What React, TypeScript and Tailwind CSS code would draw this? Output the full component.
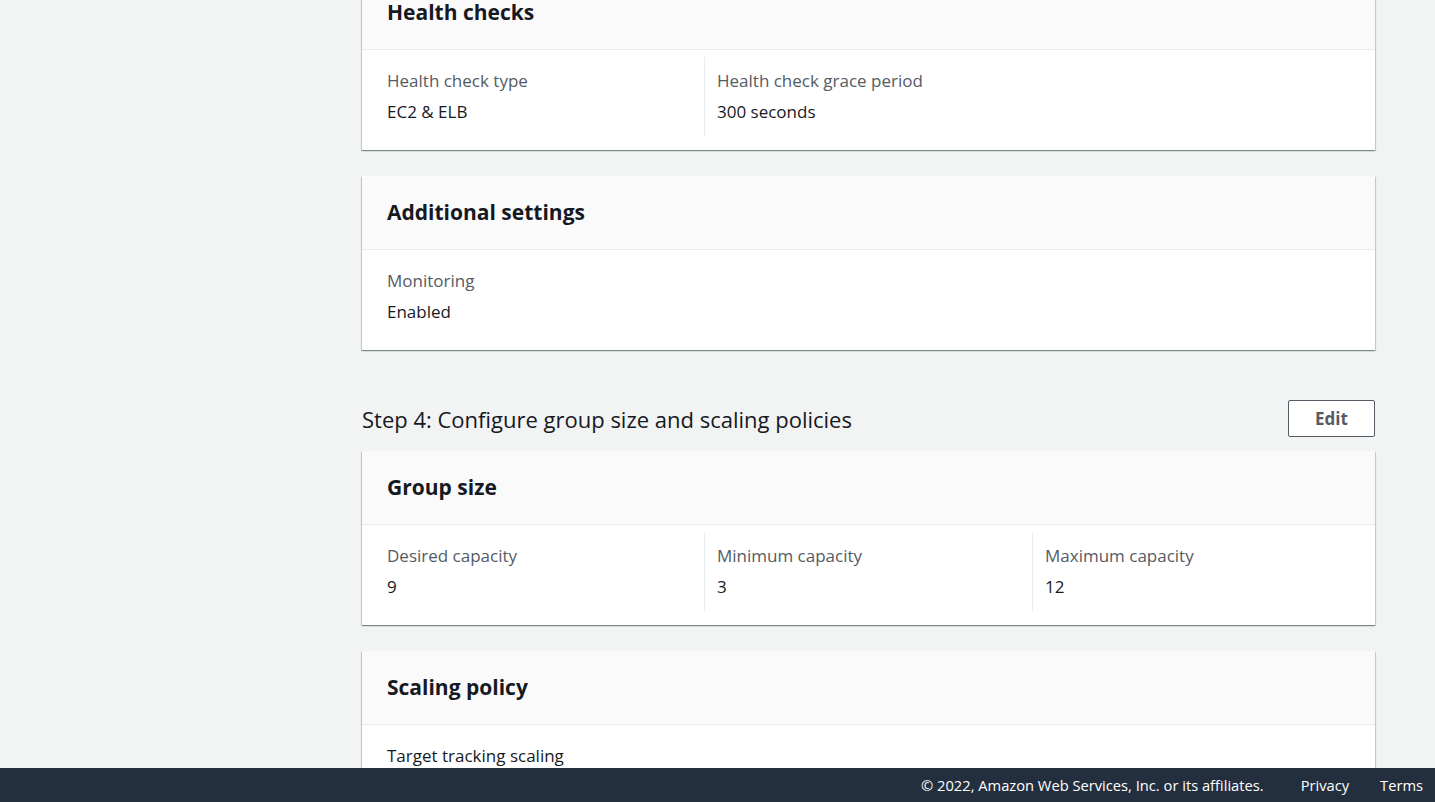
import React from 'react';

type Field = { label?: string; value: string };

const cardShadow =
  'shadow-[0_1px_1px_0_rgba(0,28,36,0.3),1px_1px_1px_0_rgba(0,28,36,0.15),-1px_1px_1px_0_rgba(0,28,36,0.15)]';

const Card: React.FC<{ title: string; fields: Field[]; className?: string; columns?: boolean }> = ({
  title,
  fields,
  className = '',
  columns = true,
}) => (
  <div className={`bg-white ${cardShadow} ${className}`}>
    <div className="h-[74px] flex items-center bg-[#fafafa] border-b border-[#eaeded] px-[25px] pb-[2px]">
      <h2 className="text-[21px] leading-[24px] font-bold text-[#16191f]">{title}</h2>
    </div>
    <div className="h-[100px] pl-[14px] pr-[15px] pt-[7px]">
      {columns ? (
        <div className="grid grid-cols-3">
          {fields.map((f, i) => (
            <div
              key={f.label}
              className={`pt-[12px] pb-[13px] ${i > 0 ? 'border-l border-[#eaeded] pl-[12px]' : 'pl-[11px]'}`}
            >
              <div className="text-[17px] leading-[24px] text-[#545b64]">{f.label}</div>
              <div className="mt-[7px] text-[17px] leading-[24px] text-[#16191f]">{f.value}</div>
            </div>
          ))}
        </div>
      ) : (
        <div className="pl-[11px] pt-[12px]">
          {fields.map((f) => (
            <div key={f.value} className="text-[17px] leading-[24px] text-[#16191f]">
              {f.value}
            </div>
          ))}
        </div>
      )}
    </div>
  </div>
);

export default function App() {
  return (
    <div
      className="h-[802px] w-full flex flex-col overflow-hidden bg-[#f2f3f3]"
      style={{ fontFamily: '"Open Sans", "Noto Sans", sans-serif' }}
    >
      <div className="flex-1 overflow-hidden flex">
        <div className="w-[362px] shrink-0" />
        <main className="w-[1013px] shrink-0 mt-[-24px]">
          <Card
            title="Health checks"
            fields={[
              { label: 'Health check type', value: 'EC2 & ELB' },
              { label: 'Health check grace period', value: '300 seconds' },
            ]}
          />
          <Card
            className="mt-[26px]"
            title="Additional settings"
            fields={[{ label: 'Monitoring', value: 'Enabled' }]}
          />

          <div className="mt-[50px] flex items-center justify-between">
            <h2 className="text-[22px] leading-[30px] text-[#16191f]">
              Step 4: Configure group size and scaling policies
            </h2>
            <button className="h-[37px] w-[87px] border border-[#545b64] rounded-[2px] bg-white text-[17px] font-bold text-[#545b64]">
              Edit
            </button>
          </div>

          <Card
            className="mt-[14px]"
            title="Group size"
            fields={[
              { label: 'Desired capacity', value: '9' },
              { label: 'Minimum capacity', value: '3' },
              { label: 'Maximum capacity', value: '12' },
            ]}
          />
          <Card
            className="mt-[26px]"
            title="Scaling policy"
            columns={false}
            fields={[{ value: 'Target tracking scaling' }]}
          />
        </main>
      </div>

      <footer className="h-[34px] shrink-0 bg-[#232f3e] flex items-center justify-end pr-[12px] pt-[1px] text-[14.7px] text-white">
        <span>© 2022, Amazon Web Services, Inc. or its affiliates.</span>
        <a className="ml-[37px]">Privacy</a>
        <a className="ml-[31px]">Terms</a>
      </footer>
    </div>
  );
}
